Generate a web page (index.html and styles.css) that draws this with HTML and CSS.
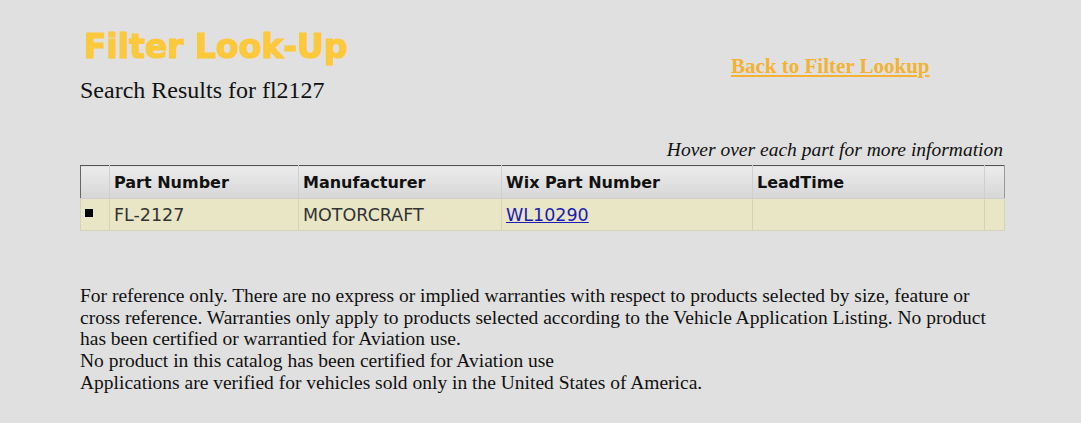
FILE: index.html
```html
<!DOCTYPE html>
<html>
<head>
<meta charset="utf-8">
<link rel="stylesheet" href="styles.css">
</head>
<body>
<div class="page">
  <div class="top">
    <div class="titles">
      <div class="logo">Filter Look-Up</div>
      <div class="search">Search Results for fl2127</div>
    </div>
    <a class="back" href="#">Back to Filter Lookup</a>
  </div>
  <div class="hover">Hover over each part for more information</div>
  <table class="grid">
    <thead>
      <tr>
        <th class="c0"></th>
        <th class="c1">Part Number</th>
        <th class="c2">Manufacturer</th>
        <th class="c3">Wix Part Number</th>
        <th class="c4">LeadTime</th>
        <th class="c5"></th>
      </tr>
    </thead>
    <tbody>
      <tr>
        <td class="c0"><span class="sq"></span></td>
        <td>FL-2127</td>
        <td>MOTORCRAFT</td>
        <td><a class="part" href="#">WL10290</a></td>
        <td></td>
        <td></td>
      </tr>
    </tbody>
  </table>
  <div class="note">
    For reference only. There are no express or implied warranties with respect to products selected by size, feature or cross reference. Warranties only apply to products selected according to the Vehicle Application Listing. No product has been certified or warrantied for Aviation use.<br>
    No product in this catalog has been certified for Aviation use<br>
    Applications are verified for vehicles sold only in the United States of America.
  </div>
</div>
</body>
</html>
```
FILE: styles.css
```css
html, body {
  margin: 0;
  padding: 0;
  background: #e0e0e0;
}
body {
  font-family: "Liberation Serif", "Times New Roman", serif;
  color: #111;
}
.page {
  width: 924px;
  padding: 30px 0 0 80px;
}
.top {
  display: flex;
  align-items: flex-start;
}
.titles {
  width: 651px;
}
.logo {
  font-family: "DejaVu Sans", Verdana, sans-serif;
  font-weight: bold;
  font-size: 33px;
  line-height: 34px;
  color: #fdc83a;
  -webkit-text-stroke: 1.2px #fdc83a;
  margin-left: 4px;
}
.search {
  font-size: 24px;
  line-height: 28px;
  margin-top: 12px;
}
.back {
  margin-top: 24px;
  font-weight: bold;
  font-size: 21px;
  color: #f3b233;
  text-decoration: underline;
}
.hover {
  margin-top: 35px;
  text-align: right;
  font-style: italic;
  font-size: 19.5px;
  line-height: 22px;
  padding-right: 1px;
}
.grid {
  width: 925px;
  border-collapse: collapse;
  font-family: "DejaVu Sans", Verdana, sans-serif;
  font-size: 16px;
  margin-top: 4px;
}
.grid th {
  height: 32px;
  padding: 0 0 0 4px;
  text-align: left;
  font-weight: bold;
  color: #111;
  background: linear-gradient(#ececec, #d6d6d6);
  border-top: 1px solid #555;
  border-left: 1px solid #666;
  border-bottom: 1px solid #cfcfcf;
  border-right: 1px solid #cfcfcf;
}
.grid td {
  height: 31px;
  padding: 0 0 0 4px;
  background: #e9e6c6;
  color: #333;
  font-size: 17.5px;
  border: 1px solid #d4d2b8;
}
.c0 { width: 24px; }
.c1 { width: 184px; }
.c2 { width: 198px; }
.c3 { width: 246px; }
.c4 { width: 227px; }
.c5 { width: 15px; }
.grid th.c5 { border-right: 1px solid #999; }
.sq {
  display: inline-block;
  width: 8px;
  height: 8px;
  background: #000;
  vertical-align: 4px;
}
.part {
  color: #1b1bb5;
}
.note {
  margin-top: 54px;
  font-size: 19.5px;
  line-height: 21.7px;
  width: 924px;
}
```
